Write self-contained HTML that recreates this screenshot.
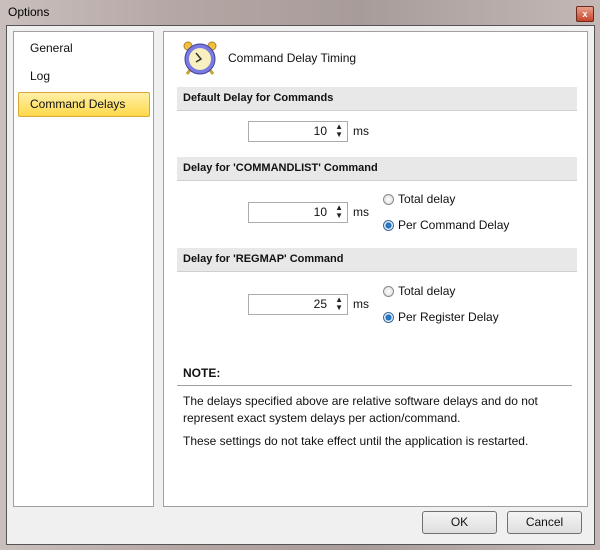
<!DOCTYPE html>
<html><head><style>
body{margin:0;width:600px;height:550px;overflow:hidden;font-family:"Segoe UI","Liberation Sans",sans-serif;font-size:12px;color:#111;}
.win{position:absolute;left:0;top:0;width:600px;height:550px;background:linear-gradient(90deg,#c9bfbd,#b4a6a3 30%,#a89c9a 60%,#c4b8b6);}
.title{position:absolute;left:8px;top:5px;font-size:12px;color:#000;}
.close{position:absolute;left:576px;top:6px;width:16px;height:14px;background:linear-gradient(#e8a08c,#c8442a);border:1px solid #6b2a20;border-radius:2px;color:#fff;font-size:9px;text-align:center;line-height:14px;font-weight:bold;}
.client{position:absolute;left:6px;top:25px;width:587px;height:518px;background:#f0f0f0;border:1px solid #555;}
.list{position:absolute;left:13px;top:31px;width:139px;height:474px;background:#fff;border:1px solid #a0a0a0;}
.item{position:absolute;left:16px;font-size:12px;}
.sel{position:absolute;left:4px;top:60px;width:130px;height:23px;background:linear-gradient(#fff0a8,#ffd84a);border:1px solid #d8a838;border-radius:2px;}
.panel{position:absolute;left:163px;top:31px;width:423px;height:474px;background:#fff;border:1px solid #a0a0a0;}
.hdr{position:absolute;left:177px;width:400px;height:23px;background:#e8e8e8;border-bottom:1px solid #d0d0d0;font-weight:bold;font-size:11px;line-height:23px;text-indent:6px;}
.spin{position:absolute;left:248px;width:98px;height:19px;background:#fff;border:1px solid #ababab;}
.spin span{position:absolute;right:20px;top:2px;font-size:12px;}
.spin i{position:absolute;right:4px;top:1px;font-style:normal;font-size:8px;line-height:8px;color:#222;}
.ms{position:absolute;left:353px;font-size:12px;}
.radio{position:absolute;left:383px;font-size:12px;}
.radio b{display:inline-block;width:11px;height:11px;border-radius:50%;border:1px solid #8a8a8a;background:radial-gradient(#fff,#d8d8d8);vertical-align:-2px;margin-right:4px;box-sizing:border-box;}
.radio b.on{background:radial-gradient(circle,#2a8ad8 0,#1a6ab8 2.5px,#e8eef4 3.5px);border-color:#3c6a9a;}
.btn{position:absolute;top:511px;width:73px;height:21px;border:1px solid #707070;border-radius:3px;background:linear-gradient(#f4f4f4,#dedede);text-align:center;line-height:21px;font-size:12px;}
</style></head><body>
<div class="win">
<div class="title">Options</div>
<div class="close">x</div>
<div class="client"></div>
<div class="list">
<div class="item" style="top:9px">General</div>
<div class="item" style="top:37px">Log</div>
<div class="sel"></div>
<div class="item" style="top:65px">Command Delays</div>
</div>
<div class="panel"></div>
<svg style="position:absolute;left:182px;top:40px" width="36" height="36" viewBox="0 0 36 36">
<circle cx="6" cy="6" r="4" fill="#f0c040" stroke="#b08020"/>
<circle cx="30" cy="6" r="4" fill="#f0c040" stroke="#b08020"/>
<line x1="8" y1="30" x2="5" y2="34" stroke="#c8a030" stroke-width="3"/>
<line x1="28" y1="30" x2="31" y2="34" stroke="#c8a030" stroke-width="3"/>
<circle cx="18" cy="19" r="15" fill="#7a7ae0" stroke="#4040a0"/>
<circle cx="18" cy="19" r="11" fill="#f8f0c0"/>
<polyline points="14,13 19,19 14,22" fill="none" stroke="#333" stroke-width="1.5"/>
</svg>
<div style="position:absolute;left:228px;top:51px;font-size:12px">Command Delay Timing</div>
<div class="hdr" style="top:87px">Default Delay for Commands</div>
<div class="spin" style="top:121px"><span>10</span><i>▲<br>▼</i></div>
<div class="ms" style="top:124px">ms</div>
<div class="hdr" style="top:157px">Delay for 'COMMANDLIST' Command</div>
<div class="spin" style="top:202px"><span>10</span><i>▲<br>▼</i></div>
<div class="ms" style="top:205px">ms</div>
<div class="radio" style="top:192px"><b></b>Total delay</div>
<div class="radio" style="top:218px"><b class="on"></b>Per Command Delay</div>
<div class="hdr" style="top:248px">Delay for 'REGMAP' Command</div>
<div class="spin" style="top:294px"><span>25</span><i>▲<br>▼</i></div>
<div class="ms" style="top:297px">ms</div>
<div class="radio" style="top:284px"><b></b>Total delay</div>
<div class="radio" style="top:310px"><b class="on"></b>Per Register Delay</div>
<div style="position:absolute;left:183px;top:366px;font-weight:bold;font-size:12px">NOTE:</div>
<div style="position:absolute;left:177px;top:385px;width:395px;border-top:1px solid #a0a0a0"></div>
<div style="position:absolute;left:183px;top:393px;width:390px;font-size:12px;line-height:17px">The delays specified above are relative software delays and do not represent exact system delays per action/command.</div>
<div style="position:absolute;left:183px;top:434px;font-size:12px">These settings do not take effect until the application is restarted.</div>
<div class="btn" style="left:422px">OK</div>
<div class="btn" style="left:507px">Cancel</div>
</div>
</body></html>
